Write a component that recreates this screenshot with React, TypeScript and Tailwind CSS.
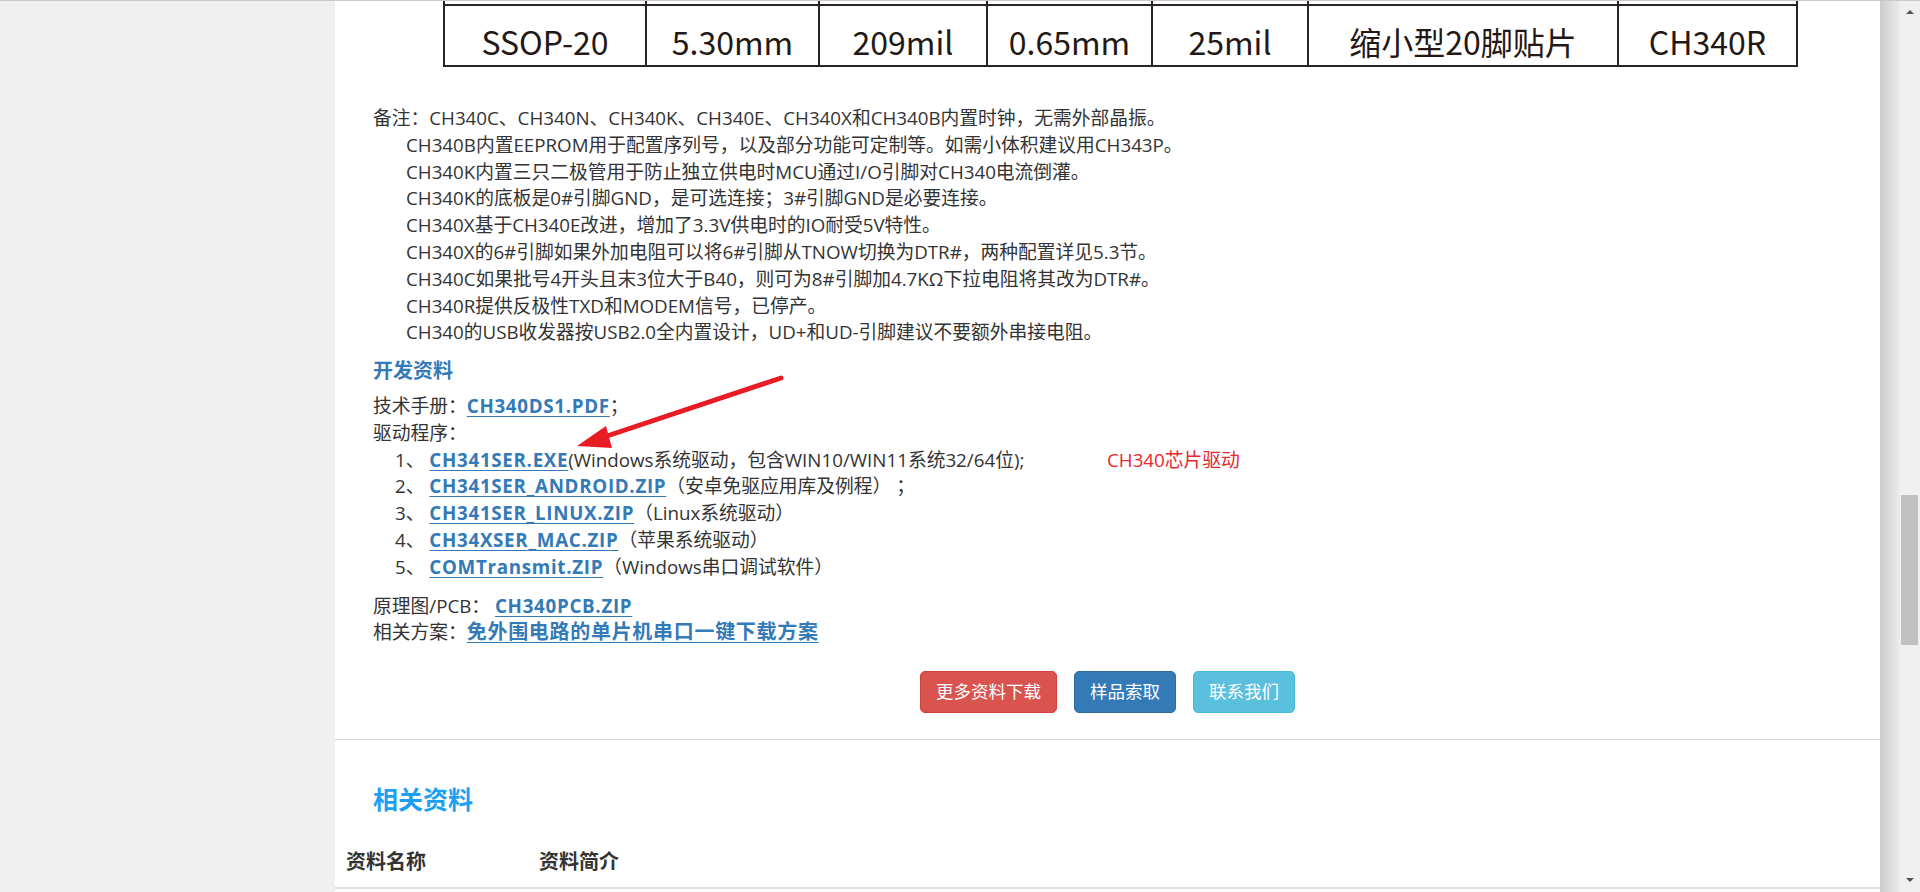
import React from "react";

const notes = [
  "CH340B内置EEPROM用于配置序列号，以及部分功能可定制等。如需小体积建议用CH343P。",
  "CH340K内置三只二极管用于防止独立供电时MCU通过I/O引脚对CH340电流倒灌。",
  "CH340K的底板是0#引脚GND，是可选连接；3#引脚GND是必要连接。",
  "CH340X基于CH340E改进，增加了3.3V供电时的IO耐受5V特性。",
  "CH340X的6#引脚如果外加电阻可以将6#引脚从TNOW切换为DTR#，两种配置详见5.3节。",
  "CH340C如果批号4开头且末3位大于B40，则可为8#引脚加4.7KΩ下拉电阻将其改为DTR#。",
  "CH340R提供反极性TXD和MODEM信号，已停产。",
  "CH340的USB收发器按USB2.0全内置设计，UD+和UD-引脚建议不要额外串接电阻。",
];

const cells = ["SSOP-20", "5.30mm", "209mil", "0.65mm", "25mil", "缩小型20脚贴片", "CH340R"];

function Link({ children, big }: { children: React.ReactNode; big?: boolean }) {
  return (
    <a
      className={
        "font-bold text-[#337ab7] underline underline-offset-[3px] decoration-1 tracking-[0.7px] " +
        (big ? "text-[20px]" : "")
      }
    >
      {children}
    </a>
  );
}

export default function App() {
  return (
    <div className="w-[1920px] h-[892px] overflow-hidden flex flex-col bg-[#f0f0f0] font-['Open_Sans','Noto_Sans_CJK_SC',sans-serif] text-[#333]">
      <div className="h-px bg-[#c9c9c9] shrink-0" />
      <div className="flex flex-1 min-h-0">
        <div className="w-[335px] shrink-0" />
        <main className="relative w-[1545px] shrink-0 bg-white overflow-hidden">
          {/* product table image (clipped) */}
          <div className="ml-[108px] w-[1355px] flex flex-col font-['Noto_Sans_CJK_SC',sans-serif] text-[#231815]">
            <div className="grid grid-cols-[202px_173px_168px_165px_156px_310px_181px] h-[3px]">
              {cells.map((c, i) => (
                <div key={i} className={"border-l-2 border-[#2b2424] " + (i === 6 ? "border-r-2" : "")} />
              ))}
            </div>
            <div className="h-[2px] bg-[#2b2424]" />
            <div className="grid grid-cols-[202px_173px_168px_165px_156px_310px_181px] h-[59px]">
              {cells.map((c, i) => (
                <div
                  key={i}
                  className={
                    "border-l-2 border-[#2b2424] flex items-center justify-center pt-[10px] text-[32px] leading-none " +
                    (i === 6 ? "border-r-2" : "")
                  }
                >
                  {c}
                </div>
              ))}
            </div>
            <div className="h-[2px] bg-[#2b2424]" />
          </div>

          <div className="px-[38px] text-[18.75px] leading-[26.8px]">
            <div className="mt-[38px]">
              <div>备注：CH340C、CH340N、CH340K、CH340E、CH340X和CH340B内置时钟，无需外部晶振。</div>
              {notes.map((n, i) => (
                <div key={i} className="pl-[33px]">
                  {n}
                </div>
              ))}
            </div>
            <div className="mt-[12px] font-bold text-[20px] text-[#337ab7]">开发资料</div>
            <div className="mt-[8px]">
              技术手册：<Link>CH340DS1.PDF</Link>；
            </div>
            <div>驱动程序：</div>
            <div className="pl-[22px]">
              <div className="flex">
                <span className="w-[712px] shrink-0">
                  1、 <Link>CH341SER.EXE</Link>(Windows系统驱动，包含WIN10/WIN11系统32/64位);
                </span>
                <span className="text-[#e8262d]">CH340芯片驱动</span>
              </div>
              <div>
                2、 <Link>CH341SER_ANDROID.ZIP</Link>（安卓免驱应用库及例程） ；
              </div>
              <div>
                3、 <Link>CH341SER_LINUX.ZIP</Link>（Linux系统驱动）
              </div>
              <div>
                4、 <Link>CH34XSER_MAC.ZIP</Link>（苹果系统驱动）
              </div>
              <div>
                5、 <Link>COMTransmit.ZIP</Link>（Windows串口调试软件）
              </div>
            </div>
            <div className="mt-[12px]">
              原理图/PCB： <Link>CH340PCB.ZIP</Link>
            </div>
            <div>
              相关方案：<Link big>免外围电路的单片机串口一键下载方案</Link>
            </div>
            <div className="mt-[25px] flex justify-center gap-[17px] text-[17.5px] text-white">
              <button className="h-[42px] px-[15px] rounded-[5px] bg-[#d9534f] border border-[#d43f3a] leading-none">更多资料下载</button>
              <button className="h-[42px] px-[15px] rounded-[5px] bg-[#337ab7] border border-[#2e6da4] leading-none">样品索取</button>
              <button className="h-[42px] px-[15px] rounded-[5px] bg-[#5bc0de] border border-[#46b8da] leading-none">联系我们</button>
            </div>
          </div>

          <div className="h-px bg-[#d6d6d6] mt-[26px]" />

          <div className="px-[38px] mt-[42px] text-[25px] leading-[34px] font-bold text-[#1e9ff2]">相关资料</div>
          <div className="mt-[32px] flex text-[20px] leading-[28px] font-bold text-[#333] pb-[11px] border-b-2 border-[#dddddd]">
            <div className="w-[204px] pl-[11px]">资料名称</div>
            <div>资料简介</div>
          </div>

          <svg className="absolute left-0 top-0 w-full h-full pointer-events-none" viewBox="0 0 1545 891" width="1545" height="891">
            <line x1="446" y1="377" x2="266" y2="437" stroke="#e81c24" strokeWidth="5" strokeLinecap="round" />
            <polygon points="242,445 271,425 277,447" fill="#e81c24" />
          </svg>
        </main>
        <div className="w-[20px] shrink-0 bg-linear-to-r from-[#cbcbcb] to-[#ececec]" />
        <div className="w-[20px] shrink-0 bg-[#f0f0f0] flex flex-col items-center">
          <div className="mt-[9px] w-0 h-0 border-x-[4px] border-x-transparent border-b-[4px] border-b-[#505050]" />
          <div className="mt-[481px] self-start ml-[1px] w-[17px] h-[150px] bg-[#c1c1c1]" />
          <div className="mt-[233px] w-0 h-0 border-x-[4px] border-x-transparent border-t-[4px] border-t-[#505050]" />
        </div>
      </div>
    </div>
  );
}
